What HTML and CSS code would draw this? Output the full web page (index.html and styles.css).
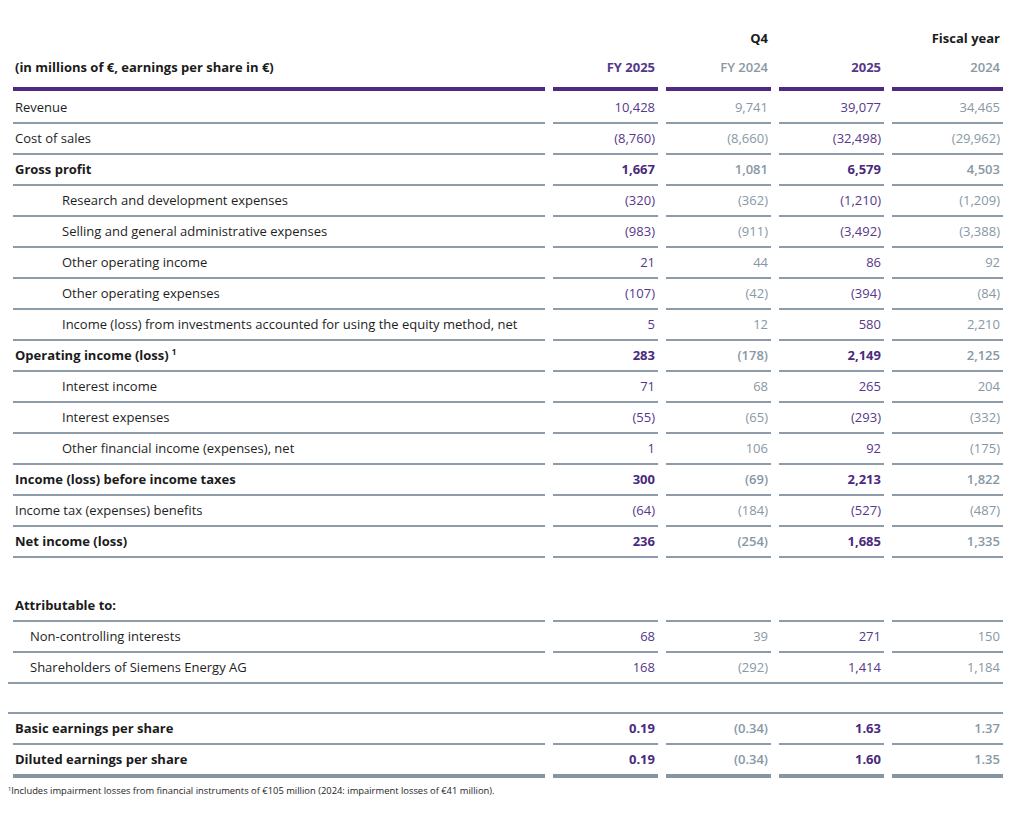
FILE: index.html
```html
<!DOCTYPE html>
<html lang="en">
<head>
<meta charset="utf-8">
<title>Income statement</title>
<link rel="stylesheet" href="styles.css">
</head>
<body>
<div class="page">
  <div class="head">
    <div class="row hrow">
      <div class="cell label"></div>
      <div class="cell num"></div>
      <div class="cell num blk">Q4</div>
      <div class="cell num"></div>
      <div class="cell num blk">Fiscal year</div>
    </div>
    <div class="row hrow hmain">
      <div class="cell label blk">(in millions of €, earnings per share in €)</div>
      <div class="cell num cur b">FY 2025</div>
      <div class="cell num prev">FY 2024</div>
      <div class="cell num cur b">2025</div>
      <div class="cell num prev">2024</div>
    </div>
  </div>

  <div class="body">
    <div class="row"><div class="cell label">Revenue</div><div class="cell num cur">10,428</div><div class="cell num prev">9,741</div><div class="cell num cur">39,077</div><div class="cell num prev">34,465</div></div>
    <div class="row"><div class="cell label">Cost of sales</div><div class="cell num cur">(8,760)</div><div class="cell num prev">(8,660)</div><div class="cell num cur">(32,498)</div><div class="cell num prev">(29,962)</div></div>
    <div class="row bold"><div class="cell label">Gross profit</div><div class="cell num cur">1,667</div><div class="cell num prev">1,081</div><div class="cell num cur">6,579</div><div class="cell num prev">4,503</div></div>
    <div class="row"><div class="cell label ind">Research and development expenses</div><div class="cell num cur">(320)</div><div class="cell num prev">(362)</div><div class="cell num cur">(1,210)</div><div class="cell num prev">(1,209)</div></div>
    <div class="row"><div class="cell label ind">Selling and general administrative expenses</div><div class="cell num cur">(983)</div><div class="cell num prev">(911)</div><div class="cell num cur">(3,492)</div><div class="cell num prev">(3,388)</div></div>
    <div class="row"><div class="cell label ind">Other operating income</div><div class="cell num cur">21</div><div class="cell num prev">44</div><div class="cell num cur">86</div><div class="cell num prev">92</div></div>
    <div class="row"><div class="cell label ind">Other operating expenses</div><div class="cell num cur">(107)</div><div class="cell num prev">(42)</div><div class="cell num cur">(394)</div><div class="cell num prev">(84)</div></div>
    <div class="row"><div class="cell label ind">Income (loss) from investments accounted for using the equity method, net</div><div class="cell num cur">5</div><div class="cell num prev">12</div><div class="cell num cur">580</div><div class="cell num prev">2,210</div></div>
    <div class="row bold"><div class="cell label">Operating income (loss)<sup class="fn">1</sup></div><div class="cell num cur">283</div><div class="cell num prev">(178)</div><div class="cell num cur">2,149</div><div class="cell num prev">2,125</div></div>
    <div class="row"><div class="cell label ind">Interest income</div><div class="cell num cur">71</div><div class="cell num prev">68</div><div class="cell num cur">265</div><div class="cell num prev">204</div></div>
    <div class="row"><div class="cell label ind">Interest expenses</div><div class="cell num cur">(55)</div><div class="cell num prev">(65)</div><div class="cell num cur">(293)</div><div class="cell num prev">(332)</div></div>
    <div class="row"><div class="cell label ind">Other financial income (expenses), net</div><div class="cell num cur">1</div><div class="cell num prev">106</div><div class="cell num cur">92</div><div class="cell num prev">(175)</div></div>
    <div class="row bold"><div class="cell label">Income (loss) before income taxes</div><div class="cell num cur">300</div><div class="cell num prev">(69)</div><div class="cell num cur">2,213</div><div class="cell num prev">1,822</div></div>
    <div class="row"><div class="cell label">Income tax (expenses) benefits</div><div class="cell num cur">(64)</div><div class="cell num prev">(184)</div><div class="cell num cur">(527)</div><div class="cell num prev">(487)</div></div>
    <div class="row bold"><div class="cell label">Net income (loss)</div><div class="cell num cur">236</div><div class="cell num prev">(254)</div><div class="cell num cur">1,685</div><div class="cell num prev">1,335</div></div>
  </div>

  <div class="attr">
    <div class="row"><div class="cell label blk b">Attributable to:</div><div class="cell num"></div><div class="cell num"></div><div class="cell num"></div><div class="cell num"></div></div>
    <div class="row"><div class="cell label sub">Non-controlling interests</div><div class="cell num cur">68</div><div class="cell num prev">39</div><div class="cell num cur">271</div><div class="cell num prev">150</div></div>
    <div class="row full"><div class="cell label sub">Shareholders of Siemens Energy AG</div><div class="cell num cur">168</div><div class="cell num prev">(292)</div><div class="cell num cur">1,414</div><div class="cell num prev">1,184</div></div>
  </div>

  <div class="eps">
    <div class="row bold"><div class="cell label">Basic earnings per share</div><div class="cell num cur">0.19</div><div class="cell num prev">(0.34)</div><div class="cell num cur">1.63</div><div class="cell num prev">1.37</div></div>
    <div class="row bold last"><div class="cell label">Diluted earnings per share</div><div class="cell num cur">0.19</div><div class="cell num prev">(0.34)</div><div class="cell num cur">1.60</div><div class="cell num prev">1.35</div></div>
  </div>

  <p class="note"><sup class="fnote">1</sup>Includes impairment losses from financial instruments of €105 million (2024: impairment losses of €41 million).</p>
</div>
</body>
</html>
```
FILE: styles.css
```css
* { box-sizing: border-box; }

html, body {
  margin: 0;
  padding: 0;
  background: #ffffff;
}

body {
  font-family: "Open Sans", "Noto Sans", sans-serif;
  font-size: 13px;
  color: #1e1e1e;
}

.page {
  width: 1024px;
  padding: 24px 21px 0 8px;
}

.row {
  display: grid;
  grid-template-columns: 532px 105px 105px 105px 111px;
  column-gap: 8px;
  padding-left: 5px;
}

.cell {
  height: 31px;
  line-height: 29px;
  border-bottom: 2px solid #8d9ca8;
  white-space: nowrap;
}

.label { padding-left: 2px; }
.label.ind { padding-left: 49px; }
.label.sub { padding-left: 17px; }

.num {
  text-align: right;
  padding-right: 3px;
}

.cur { color: #56378a; }
.prev { color: #8898a5; }
.blk { color: #1b1b1b; font-weight: 700; }
.b { font-weight: 700; }

.bold .cell { font-weight: 700; }
.bold .cur { color: #4a2a7c; }
.bold .prev { font-weight: 600; }
.bold .label { color: #1b1b1b; }

/* header */
.hrow .cell {
  border-bottom: none;
  height: 29px;
}
.hmain .cell {
  height: 38px;
  line-height: 29px;
  border-bottom: 4px solid #4f2a80;
}
.hmain .prev { font-weight: 600; }
.head { margin-bottom: 2px; }

.fn {
  font-size: 8px;
  vertical-align: 5px;
  line-height: 0;
  margin-left: 3px;
}

/* attributable block */
.attr { margin-top: 33px; }
.row.full .cell { border-bottom: none; height: 29px; }
.row.full { border-bottom: 2px solid #8d9ca8; }

/* eps block */
.eps {
  margin-top: 28px;
  border-top: 2px solid #8d9ca8;
}
.row.last .cell {
  height: 33px;
  border-bottom: 4px solid #8595a1;
}

.note {
  margin: 6px 0 0 0;
  font-size: 9.4px;
  line-height: 14px;
  color: #1e1e1e;
}
.fnote {
  font-size: 5.5px;
  vertical-align: 3px;
  line-height: 0;
}
```
